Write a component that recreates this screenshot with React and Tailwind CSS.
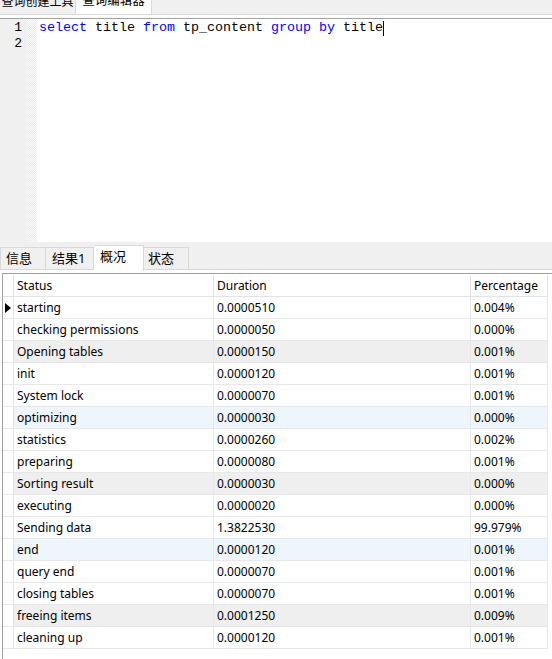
import React from 'react';

const rows = [
  ['starting', '0.0000510', '0.004%'],
  ['checking permissions', '0.0000050', '0.000%'],
  ['Opening tables', '0.0000150', '0.001%'],
  ['init', '0.0000120', '0.001%'],
  ['System lock', '0.0000070', '0.001%'],
  ['optimizing', '0.0000030', '0.000%'],
  ['statistics', '0.0000260', '0.002%'],
  ['preparing', '0.0000080', '0.001%'],
  ['Sorting result', '0.0000030', '0.000%'],
  ['executing', '0.0000020', '0.000%'],
  ['Sending data', '1.3822530', '99.979%'],
  ['end', '0.0000120', '0.001%'],
  ['query end', '0.0000070', '0.001%'],
  ['closing tables', '0.0000070', '0.001%'],
  ['freeing items', '0.0001250', '0.009%'],
  ['cleaning up', '0.0000120', '0.001%'],
];

const rowBg = (i) => {
  if (i === 2 || i === 8 || i === 14) return 'bg-[#efefef]';
  if (i === 5 || i === 11) return 'bg-[#eef5fd]';
  return 'bg-white';
};

const ui = { fontFamily: '"Noto Sans", "Noto Sans CJK SC", sans-serif' };
const mono = { fontFamily: '"Liberation Mono", monospace' };

export default function App() {
  return (
    <div className="w-[552px] h-[659px] overflow-hidden bg-white text-[12px] text-black" style={ui}>
      {/* top tabs, clipped at the top */}
      <div className="h-[15px] bg-[#f0f0f0] border-b border-[#d9d9d9] flex overflow-hidden">
        <div className="w-[76px] h-[14px] border-r border-[#d9d9d9] overflow-hidden text-center text-[12px] leading-[14px] whitespace-nowrap">
          <div className="-mt-[5px]">查询创建工具</div>
        </div>
        <div className="w-[76px] h-[14px] bg-white border-r border-[#d9d9d9] overflow-hidden text-center text-[12.5px] leading-[14px] whitespace-nowrap">
          <div className="-mt-[6px]">查询编辑器</div>
        </div>
      </div>
      <div className="h-[3px] bg-white" />
      <div className="h-px bg-[#a0a0a0]" />

      {/* editor */}
      <div className="h-[223px] flex">
        <div className="w-[27px] bg-[#f0f0f0] flex flex-col items-end pt-[1px] pr-[5px] text-[13px] leading-[16px] text-black" style={mono}>
          <div>1</div>
          <div>2</div>
        </div>
        <div className="w-[10px] bg-[repeating-conic-gradient(#e8e8e8_0_25%,#ffffff_0_50%)] bg-[length:2px_2px]" />
        <div className="flex-1 pl-[2px] pt-[1px] text-[13.33px] leading-[16px] whitespace-pre" style={mono}>
          <div className="flex items-center">
            <span className="text-[#0000ff]">select</span>
            <span> title </span>
            <span className="text-[#0000ff]">from</span>
            <span> tp_content </span>
            <span className="text-[#0000ff]">group by</span>
            <span> title</span>
            <span className="inline-block w-px h-[15px] bg-black" />
          </div>
        </div>
      </div>

      {/* splitter */}
      <div className="h-[5px] bg-[#f0f0f0]" />

      {/* bottom tabs */}
      <div className="h-[23px] bg-[#f0f0f0] flex items-end text-[13px]">
        <div className="h-[23px] w-[46px] border border-[#d9d9d9] bg-[#f0f0f0] pl-[5px] pt-px flex items-center">信息</div>
        <div className="h-[23px] w-[48px] border-t border-r border-b border-[#d9d9d9] bg-[#f0f0f0] pl-[6px] pt-px flex items-center">结果1</div>
        <div className="h-[26px] w-[50px] border-t border-r border-[#d9d9d9] bg-white pl-[6px] pb-[4px] flex items-center relative top-px">概况</div>
        <div className="h-[23px] w-[45px] border-t border-r border-b border-[#d9d9d9] bg-[#f0f0f0] pl-[4px] pt-px flex items-center">状态</div>
        <div className="flex-1 h-[23px] border-b border-[#d9d9d9]" />
      </div>
      <div className="h-[3px] bg-white" />

      {/* grid */}
      <div className="ml-[2px] border-l border-t border-[#a0a0a0] h-[387px] bg-white pt-px">
        <div className="flex w-[545px] h-[22px] border-b border-[#e3e3e3] text-[12px]">
          <div className="w-[11px] border-r border-[#e3e3e3]" />
          <div className="w-[200px] border-r border-[#e3e3e3] pl-[3px] flex items-center">Status</div>
          <div className="w-[257px] border-r border-[#e3e3e3] pl-[3px] flex items-center">Duration</div>
          <div className="w-[77px] border-r border-[#e3e3e3] pl-[3px] flex items-center">Percentage</div>
        </div>
        {rows.map((r, i) => (
          <div key={i} className={`flex w-[545px] h-[22px] border-b border-[#e8e8e8] ${rowBg(i)}`}>
            <div className="w-[11px] bg-white border-r border-[#e3e3e3] flex items-center justify-center">
              {i === 0 && (
                <svg width="6" height="10" viewBox="0 0 6 10"><path d="M0 0 L6 5 L0 10 Z" fill="#000" /></svg>
              )}
            </div>
            <div className="w-[200px] border-r border-[#e8e8e8] pl-[3px] flex items-center">{r[0]}</div>
            <div className="w-[257px] border-r border-[#e8e8e8] pl-[3px] flex items-center">{r[1]}</div>
            <div className="w-[77px] border-r border-[#e8e8e8] pl-[3px] flex items-center">{r[2]}</div>
          </div>
        ))}
      </div>
    </div>
  );
}
